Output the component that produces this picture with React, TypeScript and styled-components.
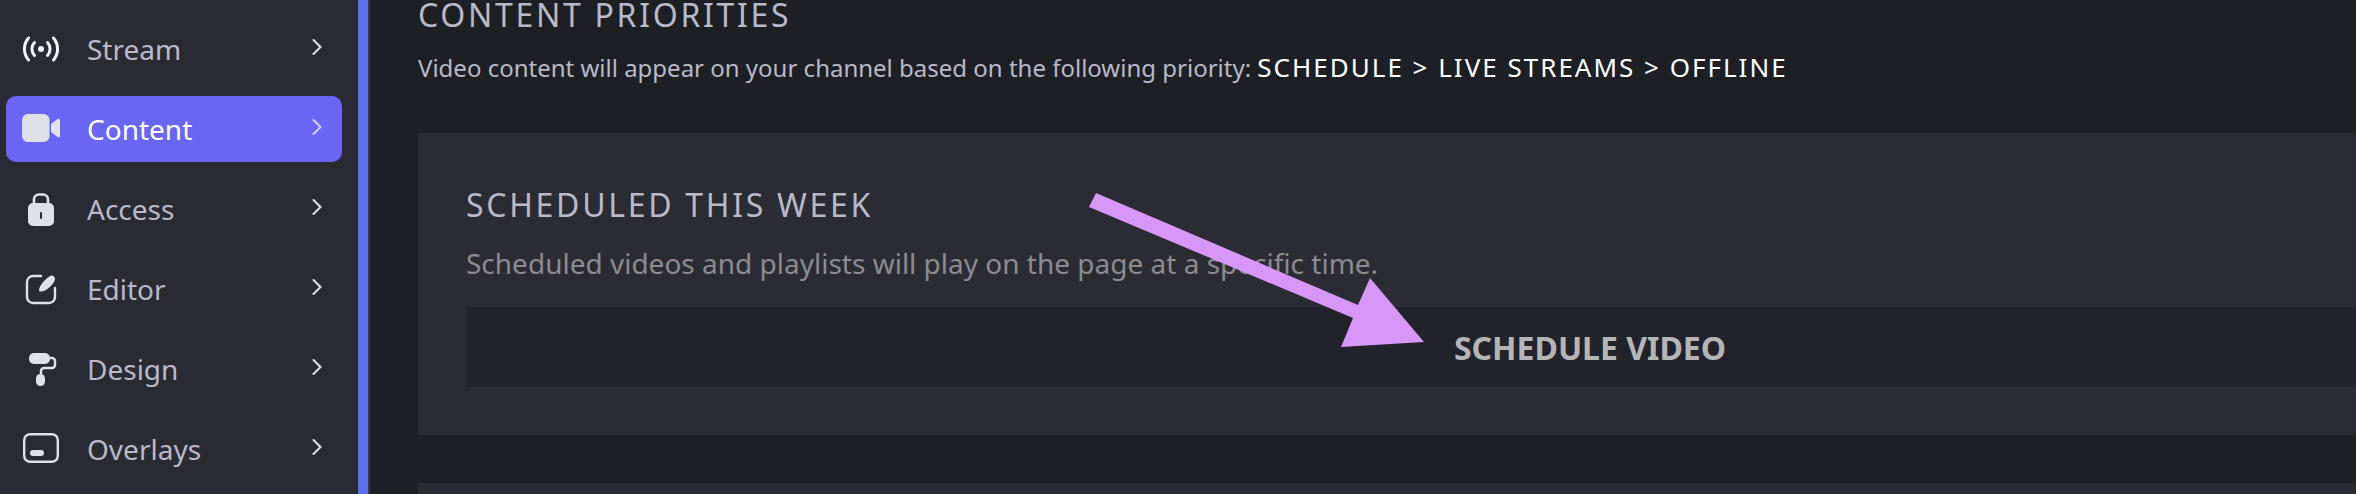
import React from 'react';
import styled, { createGlobalStyle } from 'styled-components';

const GlobalStyle = createGlobalStyle`
  html, body {
    margin: 0;
    padding: 0;
    background: #1e1f24;
    overflow: hidden;
  }
  * {
    box-sizing: border-box;
  }
`;

const Page = styled.div`
  display: flex;
  width: 2356px;
  height: 494px;
  overflow: hidden;
  font-family: 'Noto Sans', 'Open Sans', sans-serif;
`;

const Sidebar = styled.nav`
  flex: 0 0 358px;
  display: flex;
  flex-direction: column;
  gap: 14px;
  padding: 16px 16px 0 6px;
  background: #2a2a33;
`;

const NavItem = styled.div<{ $active?: boolean }>`
  flex: 0 0 66px;
  display: flex;
  align-items: center;
  gap: 26px;
  padding: 0 20px 0 15px;
  border-radius: 10px;
  font-size: 28px;
  color: ${p => (p.$active ? '#ffffff' : '#b9b9c9')};
  background: ${p => (p.$active ? '#6a66f3' : 'transparent')};
`;

const NavLabel = styled.span`
  flex: 1;
`;

const IconBox = styled.svg`
  flex: 0 0 40px;
  width: 40px;
  height: 40px;
`;

const Chevron = styled.svg<{ $active?: boolean }>`
  width: 10px;
  height: 16px;
  margin-top: -4px;
  color: ${p => (p.$active ? '#d3d2fb' : '#e0e2ea')};
`;

const Divider = styled.div`
  flex: 0 0 12px;
  background: #5f6fe8;
  border-right: 2px solid #3a3a42;
`;

const Main = styled.main`
  flex: 0 0 auto;
  width: 2392px;
  padding: 0 0 0 48px;
`;

const Heading = styled.h2`
  margin: 0;
  font-size: 32px;
  line-height: 30px;
  font-weight: 400;
  letter-spacing: 2.7px;
  color: #b9b9c9;
`;

const Intro = styled.p`
  margin: 21px 0 0;
  font-size: 24px;
  line-height: 32px;
  color: #b9b9c9;
`;

const Order = styled.span`
  font-size: 26px;
  line-height: 32px;
  letter-spacing: 2px;
  color: #ffffff;
`;

const Card = styled.section`
  margin-top: 49px;
  padding: 48px;
  height: 302px;
  background: #2b2b34;
`;

const NextCard = styled.section`
  margin-top: 48px;
  height: 100px;
  background: #2b2b34;
`;

const CardTitle = styled(Heading)`
  line-height: 48px;
`;

const CardText = styled.p`
  margin: 16px 0 0;
  font-size: 28px;
  line-height: 36px;
  color: #8b8b90;
`;

const ScheduleBar = styled.div`
  display: flex;
  align-items: center;
  justify-content: center;
  height: 80px;
  margin-top: 26px;
  background: #22222a;
  font-size: 32px;
  font-weight: 700;
  color: #b5b5b8;
`;

// annotation drawn on top of the screenshot
const Arrow = styled.svg`
  position: absolute;
  left: 0;
  top: 0;
  width: 2356px;
  height: 494px;
  pointer-events: none;
`;

const NavChevron = ({ active }: { active?: boolean }) => (
  <Chevron $active={active} viewBox="0 0 10 16" fill="none">
    <path d="M1.5 1l7 7-7 7" stroke="currentColor" strokeWidth="2" strokeLinecap="round" strokeLinejoin="round" />
  </Chevron>
);

const StreamIcon = () => (
  <IconBox viewBox="0 0 40 40" fill="none" stroke="#f4f5f8" strokeWidth="3" strokeLinecap="round">
    <circle cx="20" cy="20" r="3" fill="#f4f5f8" stroke="none" />
    <path d="M13.5 13.5a9.5 9.5 0 0 0 0 13" />
    <path d="M26.5 13.5a9.5 9.5 0 0 1 0 13" />
    <path d="M7.5 9a17 17 0 0 0 0 22" />
    <path d="M32.5 9a17 17 0 0 1 0 22" />
  </IconBox>
);

const VideoIcon = () => (
  <IconBox viewBox="0 0 40 40" fill="#dfe1e9">
    <rect x="1" y="5" width="27.500" height="28" rx="6" />
    <path d="M30 15l6.500-5c1-.8 2.500-.2 2.500 1.200v15.600c0 1.400-1.500 2-2.500 1.200L30 23z" />
  </IconBox>
);

const LockIcon = () => (
  <IconBox viewBox="0 0 40 40" fill="none">
    <path d="M13 16v-5.500a5 5 0 0 1 5-5h4a5 5 0 0 1 5 5V16" stroke="#dfe1e9" strokeWidth="2.600" />
    <path
      fillRule="evenodd"
      fill="#dfe1e9"
      d="M12 14h16a5 5 0 0 1 5 5v13a5 5 0 0 1-5 5H12a5 5 0 0 1-5-5V19a5 5 0 0 1 5-5zm7 10v5a1 1 0 0 0 2 0v-5a1 1 0 0 0-2 0z"
    />
  </IconBox>
);

const EditorIcon = () => (
  <IconBox viewBox="0 0 40 40" fill="none">
    <path
      d="M20 7h-8a6 6 0 0 0-6 6v15a6 6 0 0 0 6 6h16a6 6 0 0 0 6-6v-9"
      stroke="#dfe1e9"
      strokeWidth="2.400"
      strokeLinecap="round"
    />
    <path fill="#dfe1e9" d="M18 21c.5-4 4-9 11-14 2-1.500 5 0 5 3 0 3-5 9-10 11.500-3 1.500-6.300 1.500-6 -.5z" />
  </IconBox>
);

const DesignIcon = () => (
  <IconBox viewBox="0 0 40 40" fill="none">
    <rect x="8" y="4" width="21" height="11" rx="5" fill="#dfe1e9" />
    <path d="M29 9h2a3 3 0 0 1 3 3v4a3 3 0 0 1-3 3h-8a3 3 0 0 0-3 3v3" stroke="#dfe1e9" strokeWidth="2.400" />
    <rect x="15" y="25" width="9" height="12" rx="4.500" fill="#dfe1e9" />
  </IconBox>
);

const OverlaysIcon = () => (
  <IconBox viewBox="0 0 40 40" fill="none">
    <rect x="3.200" y="5.200" width="33.600" height="27.600" rx="6" stroke="#dfe1e9" strokeWidth="2.400" />
    <rect x="9" y="21" width="14" height="6" rx="3" fill="#dfe1e9" />
  </IconBox>
);

const navItems = [
  { label: 'Stream', icon: <StreamIcon /> },
  { label: 'Content', icon: <VideoIcon />, active: true },
  { label: 'Access', icon: <LockIcon /> },
  { label: 'Editor', icon: <EditorIcon /> },
  { label: 'Design', icon: <DesignIcon /> },
  { label: 'Overlays', icon: <OverlaysIcon /> },
];

const App: React.FC = () => (
  <>
    <GlobalStyle />
    <Page>
      <Sidebar>
        {navItems.map(item => (
          <NavItem key={item.label} $active={item.active}>
            {item.icon}
            <NavLabel>{item.label}</NavLabel>
            <NavChevron active={item.active} />
          </NavItem>
        ))}
      </Sidebar>
      <Divider />
      <Main>
        <Heading>CONTENT PRIORITIES</Heading>
        <Intro>
          Video content will appear on your channel based on the following priority:{' '}
          <Order>SCHEDULE &gt; LIVE STREAMS &gt; OFFLINE</Order>
        </Intro>
        <Card>
          <CardTitle>SCHEDULED THIS WEEK</CardTitle>
          <CardText>Scheduled videos and playlists will play on the page at a specific time.</CardText>
          <ScheduleBar>SCHEDULE VIDEO</ScheduleBar>
        </Card>
        <NextCard />
      </Main>
    </Page>
    <Arrow viewBox="0 0 2356 494">
      <polygon
        fill="#d896f7"
        points="1096,193 1358,305 1370,278 1424,342 1341,347 1353,318 1089,207"
      />
    </Arrow>
  </>
);

export default App;
